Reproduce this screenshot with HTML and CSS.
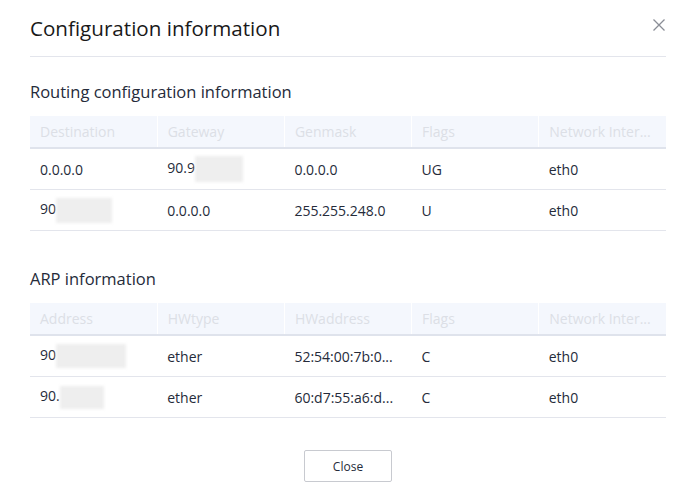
FILE: index.html
```html
<!DOCTYPE html>
<html>
<head>
<meta charset="utf-8">
<link rel="stylesheet" href="styles.css">
</head>
<body>
<div class="dialog">
  <div class="dlg-head">
    <h1 class="dlg-title">Configuration information</h1>
    <button class="dlg-close" aria-label="Close">
      <svg width="12" height="12" viewBox="0 0 12 12"><path d="M0.5 0.5 L11.5 11.5 M11.5 0.5 L0.5 11.5" stroke="#8a8d96" stroke-width="1.3" fill="none"/></svg>
    </button>
  </div>
  <div class="dlg-body">
    <h2 class="sec-title sec-first">Routing configuration information</h2>
    <table class="grid">
      <thead>
        <tr><th>Destination</th><th>Gateway</th><th>Genmask</th><th>Flags</th><th>Network Inter...</th></tr>
      </thead>
      <tbody>
        <tr><td>0.0.0.0</td><td>90.9<span class="mask m1"></span></td><td>0.0.0.0</td><td>UG</td><td>eth0</td></tr>
        <tr><td>90<span class="mask m2"></span></td><td>0.0.0.0</td><td>255.255.248.0</td><td>U</td><td>eth0</td></tr>
      </tbody>
    </table>
    <h2 class="sec-title">ARP information</h2>
    <table class="grid">
      <thead>
        <tr><th>Address</th><th>HWtype</th><th>HWaddress</th><th>Flags</th><th>Network Inter...</th></tr>
      </thead>
      <tbody>
        <tr><td>90<span class="mask m3"></span></td><td>ether</td><td>52:54:00:7b:0...</td><td>C</td><td>eth0</td></tr>
        <tr><td>90.<span class="mask m4"></span></td><td>ether</td><td>60:d7:55:a6:d...</td><td>C</td><td>eth0</td></tr>
      </tbody>
    </table>
    <div class="dlg-foot">
      <button class="btn">Close</button>
    </div>
  </div>
</div>
</body>
</html>
```
FILE: styles.css
```css
html, body {
  margin: 0;
  padding: 0;
  background: #ffffff;
}
body {
  font-family: "Open Sans", "Noto Sans", sans-serif;
  color: #252b3a;
}
.dialog {
  width: 636px;
  padding: 0 30px;
}
.dlg-head {
  display: flex;
  align-items: center;
  justify-content: space-between;
  height: 56px;
  border-bottom: 1px solid #e3e5ec;
  position: relative;
}
.dlg-title {
  margin: 0;
  font-size: 20.6px;
  font-weight: 400;
  color: #191919;
  line-height: 28px;
}
.dlg-close {
  position: absolute;
  right: 1px;
  top: 19px;
  border: 0;
  background: none;
  padding: 0;
  width: 12px;
  height: 12px;
  display: flex;
}
.sec-title {
  margin: 37px 0 13px;
  font-size: 16.5px;
  font-weight: 400;
  line-height: 22px;
  color: #252b3a;
}
.sec-first {
  margin-top: 24px;
}
.grid {
  width: 636px;
  border-collapse: collapse;
  table-layout: fixed;
  font-size: 14px;
}
.grid th {
  background: #f4f7fd;
  color: #dcdfe6;
  font-weight: 400;
  text-align: left;
  height: 31px;
  padding: 0 10px;
  border-left: 1px solid #ffffff;
  border-bottom: 2px solid #dfe3ec;
  white-space: nowrap;
}
.grid th:first-child {
  border-left: 0;
}
.grid td {
  height: 40px;
  padding: 0 10px;
  border-bottom: 1px solid #e3e5ec;
  white-space: nowrap;
  color: #252b3a;
}
.mask {
  display: inline-block;
  vertical-align: middle;
  background: #eeeeee;
  filter: blur(1.5px);
  height: 26px;
}
.m1 { width: 48px; }
.m2 { width: 56px; height: 25px; }
.m3 { width: 70px; height: 24px; }
.m4 { width: 44px; height: 23px; }
.dlg-foot {
  display: flex;
  justify-content: center;
  padding-top: 32px;
}
.btn {
  width: 88px;
  height: 32px;
  border: 1px solid #c8cad0;
  border-radius: 2px;
  background: #ffffff;
  font-family: "Open Sans", "Noto Sans", sans-serif;
  font-size: 12px;
  color: #252b3a;
}
```
